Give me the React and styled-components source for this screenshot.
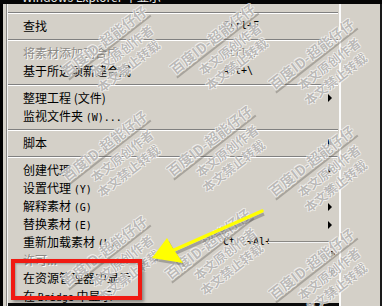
import React from "react";
import styled, { createGlobalStyle } from "styled-components";

const Global = createGlobalStyle`
  html, body { margin: 0; padding: 0; background: #d4d0c8; }
  body { font-family: "Noto Sans CJK SC", "Noto Sans", sans-serif; }
`;

const Screen = styled.div`
  position: relative;
  width: 382px;
  height: 306px;
  overflow: hidden;
  display: flex;
  flex-direction: column;
  background: #d4d0c8;
`;

const TopStrip = styled.div`
  height: 4px;
  flex: none;
  background: #050505;
  overflow: hidden;
  padding-left: 22px;
  color: #e8e8e8;
  font-size: 12px;
  line-height: 12px;
  white-space: nowrap;
  & > span { display: block; margin-top: -9px; }
`;

const Body = styled.div`
  flex: 1;
  min-height: 0;
  display: flex;
`;

const LeftFrame = styled.div`
  width: 8px;
  flex: none;
  background: linear-gradient(to right, #000 0 3px, #d4d0c8 3px 6px, #8a8884 6px 7px, #f4f4f4 7px 8px);
`;

const MenuCol = styled.div`
  width: 331px;
  flex: none;
  display: flex;
  flex-direction: column;
  padding-top: 4px;
  background: #d4d0c8;
  border-right: 2px solid #fbfbfb;
`;

const Sep = styled.div`
  height: 9px;
  flex: none;
  display: flex;
  flex-direction: column;
  justify-content: center;
  margin: 0 1px 0 0;
  &::before { content: ""; height: 1px; background: #808080; }
  &::after { content: ""; height: 1px; background: #ffffff; }
`;

const Item = styled.div`
  height: ${p => (p.$h ? p.$h : 18)}px;
  flex: none;
  overflow: hidden;
  display: grid;
  grid-template-columns: 200px 1fr 11px;
  align-items: center;
  padding-left: 15px;
  font-family: "Noto Sans CJK SC", sans-serif;
  font-size: 12px;
  line-height: 18px;
  color: ${p => (p.$off ? "#8c8a86" : "#000")};
  text-shadow: ${p => (p.$off ? "1px 1px 0 #ffffff" : "none")};
  white-space: nowrap;
`;

const Label = styled.span`
  display: block;
  align-self: start;
`;

const Lat = styled.span`
  font-family: "DejaVu Sans Mono", "Liberation Mono", monospace;
  font-size: 10px;
`;

const Keys = styled.span`
  font-family: "DejaVu Sans Mono", "Liberation Mono", monospace;
  font-size: 10px;
  align-self: start;
  line-height: 18px;
`;

const Sub = styled.span`
  width: 0;
  height: 0;
  border-left: 4px solid #000;
  border-top: 4px solid transparent;
  border-bottom: 4px solid transparent;
  transform: translate(${p => p.$dx || 0}px, ${p => p.$dy || 0}px);
`;

const BottomEdge = styled.div`
  height: 3px;
  flex: none;
  margin-top: auto;
  background: #0a0a0a;
`;

const BackPanel = styled.div`
  flex: 1;
  background: #d4d0c8;
  border-right: 2px solid #1a1a1a;
`;

const StrayLine = styled.div`
  position: absolute;
  left: 268px;
  top: 241px;
  width: 73px;
  height: 1px;
  background: #8a8884;
  border-bottom: 1px solid #f4f4f4;
`;

const Mark = styled.div`
  position: absolute;
  left: ${p => p.$x}px;
  top: ${p => p.$y}px;
  transform: rotate(-38deg);
  transform-origin: 0 0;
  display: flex;
  flex-direction: column;
  align-items: flex-start;
  font-family: "Noto Sans CJK SC", sans-serif;
  font-weight: 700;
  color: rgba(95, 92, 88, 0.42);
  text-shadow: -1px 0 rgba(255,255,255,0.6), 1px 0 rgba(255,255,255,0.6), 0 1px rgba(255,255,255,0.6), 0 -1px rgba(255,255,255,0.6);
  white-space: nowrap;
  line-height: 1;
  pointer-events: none;
`;

const MarkTop = styled.span`
  font-size: 14px;
  padding-bottom: 1px;
  border-bottom: 2px solid rgba(95, 92, 88, 0.38);
`;

const MarkLine = styled.span`
  font-size: 12.5px;
  margin-top: 3px;
  margin-left: ${p => p.$in}px;
`;

const RedBox = styled.div`
  position: absolute;
  left: 11px;
  top: 259px;
  width: 131px;
  height: 41px;
  box-sizing: border-box;
  border: 4px solid #f01a12;
  box-shadow: 2px 2px 3px rgba(0, 0, 0, 0.35), inset 1px 1px 2px rgba(0, 0, 0, 0.25);
  pointer-events: none;
`;

const ArrowSvg = styled.svg`
  position: absolute;
  left: 0;
  top: 0;
  pointer-events: none;
`;

const marks = [
  [59, 67], [167, 65], [266, 80],
  [59, 172], [164, 167], [266, 187],
  [59, 277], [162, 270], [266, 290],
];

function Watermark({ x, y }) {
  return (
    <Mark $x={x} $y={y}>
      <MarkTop>百度ID-超能仔仔</MarkTop>
      <MarkLine $in={22}>本文原创作者</MarkLine>
      <MarkLine $in={18}>本文禁止转载</MarkLine>
    </Mark>
  );
}

function Row({ children, keys, sub, off, h, dx, dy }) {
  return (
    <Item $off={off} $h={h}>
      <Label>{children}</Label>
      <Keys>{keys || ""}</Keys>
      {sub ? <Sub $dx={dx} $dy={dy} /> : <span />}
    </Item>
  );
}

export default function App() {
  return (
    <>
      <Global />
      <Screen>
        <TopStrip><span>Windows Explorer 中显示</span></TopStrip>
        <Body>
          <LeftFrame />
          <MenuCol>
            <Sep />
            <Row keys="Ctrl+F">查找</Row>
            <Sep />
            <Row off keys="Ctrl+/">将素材添加到合成</Row>
            <Row keys="Alt+\">基于所选项新建合成</Row>
            <Sep />
            <Row sub>整理工程 (文件)</Row>
            <Row>监视文件夹 <Lat>(W)...</Lat></Row>
            <Sep />
            <Row sub>脚本</Row>
            <Sep />
            <Row sub>创建代理</Row>
            <Row sub>设置代理 <Lat>(Y)</Lat></Row>
            <Row sub>解释素材 <Lat>(G)</Lat></Row>
            <Row sub>替换素材 <Lat>(E)</Lat></Row>
            <Row keys="Ctrl+Al+">重新加载素材 <Lat>(L)</Lat></Row>
            <Row off sub dx={3} dy={-6}>许可...</Row>
            <Row sub dx={3} dy={-6}>在资源管理器中显示</Row>
            <Row sub dx={3} dy={-6} h={16}>在 <Lat>Bridge</Lat> 中显示</Row>
            <BottomEdge />
          </MenuCol>
          <BackPanel />
        </Body>

        <StrayLine />
        {marks.map(([x, y], i) => (
          <Watermark key={i} x={x} y={y} />
        ))}
        <RedBox />
        <ArrowSvg width="382" height="306" viewBox="0 0 382 306">
          <g opacity="0.3" transform="translate(2,3)">
            <line x1="262" y1="211" x2="174" y2="250" stroke="#333" strokeWidth="3.5" />
            <polygon points="152,258 167,238 174,250 183,263" fill="#333" />
          </g>
          <line x1="262" y1="211" x2="174" y2="250" stroke="#ffff00" strokeWidth="3.5" strokeLinecap="round" />
          <polygon points="152,258 167,238 174,250 183,263" fill="#ffff00" />
        </ArrowSvg>
      </Screen>
    </>
  );
}
